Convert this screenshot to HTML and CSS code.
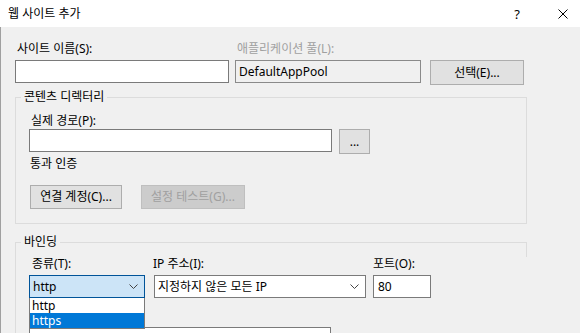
FILE: index.html
```html
<!DOCTYPE html>
<html lang="ko">
<head>
<meta charset="utf-8">
<title>웹 사이트 추가</title>
<link rel="stylesheet" href="styles.css">
</head>
<body>
<div class="window">
  <div class="titlebar">
    <div class="title">웹 사이트 추가</div>
    <div class="cap help">?</div>
    <div class="cap close">
      <svg class="x-icon" width="10" height="10" viewBox="0 0 10 10"><path d="M0.5 0.5 L9.5 9.5 M9.5 0.5 L0.5 9.5" stroke="#000" stroke-width="1" fill="none"/></svg>
    </div>
  </div>
  <div class="content">
    <div class="row1">
      <div class="lbl">사이트 이름(S):</div>
      <div class="lbl disabled pool-lbl">애플리케이션 풀(L):</div>
      <div></div>
      <div class="input"></div>
      <div class="input readonly">DefaultAppPool</div>
      <div class="btn select-btn">선택(E)...</div>
    </div>

    <fieldset class="group g1">
      <legend>콘텐츠 디렉터리</legend>
      <div class="lbl path-lbl">실제 경로(P):</div>
      <div class="path-row">
        <div class="input path-input"></div>
        <div class="btn dots">...</div>
      </div>
      <div class="lbl auth-lbl">통과 인증</div>
      <div class="btn-row">
        <div class="btn connect">연결 계정(C)...</div>
        <div class="btn off test">설정 테스트(G)...</div>
      </div>
    </fieldset>

    <fieldset class="group g2">
      <legend>바인딩</legend>
      <div class="bind-row">
        <div class="field f-type">
          <div class="lbl type-lbl">종류(T):</div>
          <div class="combo focused">
            <span class="val">http</span>
            <svg class="chev" width="9" height="5" viewBox="0 0 9 5"><polyline points="0.5,0.5 4.5,4.5 8.5,0.5" fill="none" stroke="#444" stroke-width="1"/></svg>
            <div class="dropdown">
              <div class="opt">http</div>
              <div class="opt sel">https</div>
            </div>
          </div>
        </div>
        <div class="field f-ip">
          <div class="lbl ip-lbl">IP 주소(I):</div>
          <div class="combo">
            <span class="val">지정하지 않은 모든 IP</span>
            <svg class="chev" width="9" height="5" viewBox="0 0 9 5"><polyline points="0.5,0.5 4.5,4.5 8.5,0.5" fill="none" stroke="#444" stroke-width="1"/></svg>
          </div>
        </div>
        <div class="field f-port">
          <div class="lbl">포트(O):</div>
          <div class="input port">80</div>
        </div>
      </div>
      <div class="input host"></div>
    </fieldset>
  </div>
</div>
</body>
</html>
```
FILE: styles.css
```css
* { box-sizing: border-box; }
html, body {
  margin: 0;
  padding: 0;
  width: 580px;
  height: 333px;
  overflow: hidden;
  background: #f0f0f0;
}
body {
  font-family: "Noto Sans", "Noto Sans CJK KR", sans-serif;
  font-size: 12px;
  line-height: 16px;
  color: #000;
}
.window {
  width: 580px;
  height: 333px;
  overflow: hidden;
}
.titlebar {
  height: 27px;
  background: #fff;
  display: flex;
  align-items: center;
  padding-left: 8px;
}
.title {
  flex: 1;
  font-size: 12px;
}
.cap {
  flex: 0 0 46px;
  width: 46px;
  height: 27px;
  display: flex;
  align-items: center;
  justify-content: center;
}
.help { font-size: 13px; }
.close { margin-right: -6px; }
.x-icon { display: block; flex: 0 0 auto; }

.content {
  height: 306px;
  box-shadow: inset 1px 0 0 #a0a0a0;
  overflow: hidden;
}

.lbl {
  height: 16px;
  line-height: 16px;
  white-space: nowrap;
}
.disabled { color: #a0a0a0; }

.row1 {
  display: grid;
  grid-template-columns: 214px 186px 97px;
  grid-template-rows: 16px auto;
  column-gap: 6px;
  row-gap: 3px;
  padding: 14px 0 0 15px;
  align-items: start;
}
.row1 .lbl:first-child { padding-left: 2px; }
.pool-lbl { padding-left: 2px; }

.input {
  height: 23px;
  background: #fff;
  border: 1px solid #7a7a7a;
  padding: 0 0 0 3px;
  line-height: 21px;
  white-space: nowrap;
  overflow: hidden;
}
.input.readonly {
  background: #f0f0f0;
  border-color: #8a8a8a;
}
.btn {
  height: 25px;
  background: #e1e1e1;
  border: 1px solid #adadad;
  display: flex;
  align-items: center;
  justify-content: center;
  white-space: nowrap;
}
.btn.off {
  background: #cccccc;
  border-color: #bfbfbf;
  color: #a0a0a0;
}
.select-btn { margin-left: 3px; }

.group {
  margin: 4px 0 0 15px;
  width: 512px;
  border: 1px solid #dcdcdc;
  padding: 0 0 14px 13px;
  min-width: 0;
}
.group legend {
  padding: 0 3px;
  margin-left: -8px;
  line-height: 16px;
  height: 16px;
}
.path-lbl { margin: 8px 0 0 2px; }
.path-row {
  display: flex;
  gap: 7px;
  align-items: flex-start;
}
.path-input { width: 303px; }
.dots { width: 31px; }
.auth-lbl { margin: 2px 0 0 1px; }
.btn-row {
  display: flex;
  gap: 19px;
  margin: 13px 0 0 1px;
}
.connect { width: 92px; height: 24px; }
.test { width: 104px; height: 24px; }

.g2 {
  margin-top: 10px;
  border-right: none;
  background: linear-gradient(#dcdcdc, #dcdcdc) right top / 1px 14px no-repeat;
  padding-bottom: 20px;
}
.bind-row {
  display: flex;
  margin-top: 6px;
}
.field .lbl { margin-bottom: 3px; }
.f-type { width: 116px; }
.f-ip { width: 212px; margin-left: 9px; }
.f-port { width: 58px; margin-left: 7px; }
.type-lbl { padding-left: 3px; }
.ip-lbl { margin-left: -1px; }

.combo {
  position: relative;
  height: 23px;
  border: 1px solid #7a7a7a;
  background: #fff;
  display: flex;
  align-items: center;
  padding-left: 3px;
}
.combo .val { flex: 1; white-space: nowrap; }
.combo .chev { margin-right: 6px; }
.combo.focused {
  background: #cce4f7;
  border-color: #005499;
}
.dropdown {
  position: absolute;
  top: calc(100% + 1px);
  left: -1px;
  right: -1px;
  background: #fff;
  border: 1px solid #7a7a7a;
  border-top: none;
  z-index: 2;
}
.opt {
  height: 15px;
  line-height: 15px;
  padding-left: 2px;
}
.opt.sel {
  background: #0078d7;
  color: #fff;
}
.port { padding-left: 4px; }
.host { width: 302px; margin-top: 29px; }
```
